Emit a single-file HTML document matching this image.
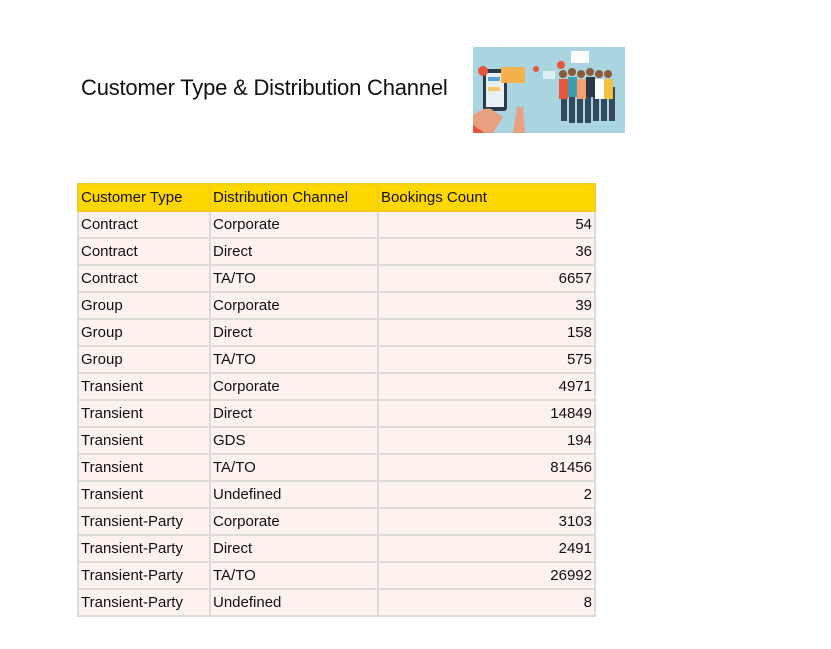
<!DOCTYPE html>
<html><head><style>
body{margin:0;width:831px;height:649px;background:#fff;position:relative;font-family:"Segoe UI","Liberation Sans",sans-serif;overflow:hidden}
.t{position:absolute;left:81px;top:75px;font-size:22px;color:#111;letter-spacing:-0.2px}
table{position:absolute;left:77px;top:183px;border-collapse:collapse;table-layout:fixed;width:517px;font-size:15px;color:#111}
td{box-sizing:border-box;height:27px;padding:0 2px;border:2px solid #dedad8;background:#fdf2ee;line-height:23px;white-space:nowrap}
tr:first-child td{background:#ffd700;border-color:#f0cf20}
td:nth-child(1){width:132px}td:nth-child(2){width:168px}td:nth-child(3){width:217px;text-align:right}
tr:first-child td:nth-child(3){text-align:left}
</style></head><body>
<div class="t">Customer Type &amp; Distribution Channel</div>
<svg style="position:absolute;left:473px;top:47px" width="152" height="86" viewBox="0 0 152 86">
<rect width="152" height="86" fill="#a8d5df"/>
<rect x="10" y="22" width="24" height="42" rx="3" fill="#2a3a4a"/><rect x="13" y="26" width="18" height="34" fill="#e8f0f4"/>
<rect x="15" y="30" width="12" height="4" fill="#5aa0d0"/><rect x="15" y="40" width="12" height="4" fill="#f5c76a"/>
<rect x="28" y="20" width="24" height="16" fill="#f5b24a"/>
<circle cx="10" cy="24" r="5" fill="#e8553a"/><circle cx="63" cy="22" r="3" fill="#e8553a"/><circle cx="88" cy="18" r="4" fill="#e8553a"/>
<rect x="98" y="4" width="18" height="12" fill="#fff"/><rect x="70" y="24" width="12" height="8" fill="#dff0f4"/>
<path d="M0 86 L0 68 Q10 60 18 62 L30 70 L20 86Z" fill="#e8a080"/><path d="M0 78 L12 86 L0 86Z" fill="#e8553a"/>
<path d="M40 86 L44 60 L50 60 L52 86Z" fill="#e8a080"/>
<g fill="#34495e"><rect x="88" y="40" width="6" height="34"/><rect x="96" y="38" width="6" height="38"/><rect x="104" y="40" width="6" height="36"/><rect x="112" y="38" width="6" height="38"/><rect x="120" y="40" width="6" height="34"/><rect x="128" y="40" width="6" height="34"/><rect x="136" y="40" width="6" height="34"/></g>
<g><rect x="86" y="32" width="9" height="20" fill="#e8553a"/><rect x="95" y="30" width="9" height="20" fill="#3aa0b0"/><rect x="104" y="32" width="9" height="20" fill="#f5a070"/><rect x="113" y="30" width="9" height="20" fill="#2a3a4a"/><rect x="122" y="32" width="9" height="20" fill="#fff"/><rect x="131" y="32" width="9" height="20" fill="#f5c040"/></g>
<g fill="#8a5a3a"><circle cx="90" cy="27" r="4"/><circle cx="99" cy="25" r="4"/><circle cx="108" cy="27" r="4"/><circle cx="117" cy="25" r="4"/><circle cx="126" cy="27" r="4"/><circle cx="135" cy="27" r="4"/></g>
</svg>
<table>
<tr><td>Customer Type</td><td>Distribution Channel</td><td>Bookings Count</td></tr>
<tr><td>Contract</td><td>Corporate</td><td>54</td></tr>
<tr><td>Contract</td><td>Direct</td><td>36</td></tr>
<tr><td>Contract</td><td>TA/TO</td><td>6657</td></tr>
<tr><td>Group</td><td>Corporate</td><td>39</td></tr>
<tr><td>Group</td><td>Direct</td><td>158</td></tr>
<tr><td>Group</td><td>TA/TO</td><td>575</td></tr>
<tr><td>Transient</td><td>Corporate</td><td>4971</td></tr>
<tr><td>Transient</td><td>Direct</td><td>14849</td></tr>
<tr><td>Transient</td><td>GDS</td><td>194</td></tr>
<tr><td>Transient</td><td>TA/TO</td><td>81456</td></tr>
<tr><td>Transient</td><td>Undefined</td><td>2</td></tr>
<tr><td>Transient-Party</td><td>Corporate</td><td>3103</td></tr>
<tr><td>Transient-Party</td><td>Direct</td><td>2491</td></tr>
<tr><td>Transient-Party</td><td>TA/TO</td><td>26992</td></tr>
<tr><td>Transient-Party</td><td>Undefined</td><td>8</td></tr>
</table>
</body></html>
